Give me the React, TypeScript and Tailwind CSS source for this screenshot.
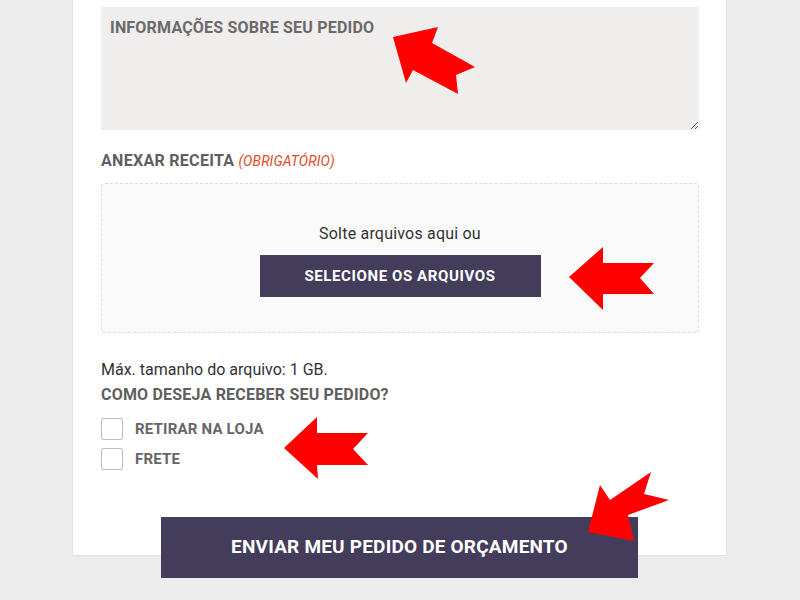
import React from "react";

const font = { fontFamily: "Roboto, 'Open Sans', sans-serif" };

function Checkbox({ label }: { label: string }) {
  return (
    <label className="flex items-center h-[22px]">
      <span className="w-[22px] h-[22px] border border-[#bdbdbd] rounded-[2px] bg-white shrink-0" />
      <span className="ml-[12px] text-[15px] font-bold text-[#666] leading-none tracking-[0.2px]">{label}</span>
    </label>
  );
}

function Arrows() {
  return (
    <svg className="absolute inset-0 pointer-events-none" width="800" height="600" viewBox="0 0 800 600">
      <g fill="#ff0000">
        <polygon points="393,37 438,27 432,43 475,67 456,75 458,94 413,70 406,83" />
        <polygon points="569,277 603,247 603,263 654,263 640,278 654,294 603,294 603,310" />
        <polygon points="284,448 317,417 317,433 368,433 353,449 368,465 317,465 318,479" />
        <polygon points="588,532 600,485 610,500 651,472 644,494 669,500 628,515 634,541" />
      </g>
    </svg>
  );
}

export default function App() {
  return (
    <div className="relative w-[800px] h-[600px] bg-[#ececec] overflow-hidden" style={font}>
      <div className="ml-[72px] w-[655px] h-[556px] bg-white border-x border-b border-[#e2e2e2] pl-[28px] pt-[7px]">
        <textarea
          className="block w-[598px] h-[123px] bg-[#f0eded] px-[9px] pt-[10px] text-[16px] leading-[22px] font-bold text-[#666] placeholder:text-[#6a6a6a] placeholder:font-bold outline-none tracking-[0.2px]"
          placeholder="INFORMAÇÕES SOBRE SEU PEDIDO"
        />
        <div className="mt-[21px] h-[20px] flex items-center">
          <span className="text-[16px] font-bold text-[#5f5f5f] tracking-[0.3px]">ANEXAR RECEITA</span>
          <span className="ml-[4px] text-[14px] italic text-[#e04a2a] tracking-[0.1px]">(OBRIGATÓRIO)</span>
        </div>
        <div className="mt-[12px] w-[598px] h-[150px] border border-dashed border-[#dcdcdc] rounded-[4px] bg-[#fafafa] flex flex-col items-center pt-[40px]">
          <div className="text-[16px] text-[#333] leading-[20px] tracking-[0.2px]">Solte arquivos aqui ou</div>
          <button className="mt-[11px] w-[281px] h-[42px] bg-[#433c5a] text-white text-[15px] font-bold tracking-[0.6px]">
            SELECIONE OS ARQUIVOS
          </button>
        </div>
        <div className="mt-[27px] text-[16px] text-[#333] leading-[20px]">Máx. tamanho do arquivo: 1 GB.</div>
        <div className="mt-[5px] text-[16px] font-bold text-[#5f5f5f] leading-[20px] tracking-[0.2px]">COMO DESEJA RECEBER SEU PEDIDO?</div>
        <div className="mt-[13px] flex flex-col gap-[8px]">
          <Checkbox label="RETIRAR NA LOJA" />
          <Checkbox label="FRETE" />
        </div>
        <button className="mt-[47px] ml-[60px] w-[477px] h-[61px] bg-[#433c5a] text-white text-[19px] font-bold tracking-[0.2px]">
          ENVIAR MEU PEDIDO DE ORÇAMENTO
        </button>
      </div>
      <Arrows />
    </div>
  );
}
